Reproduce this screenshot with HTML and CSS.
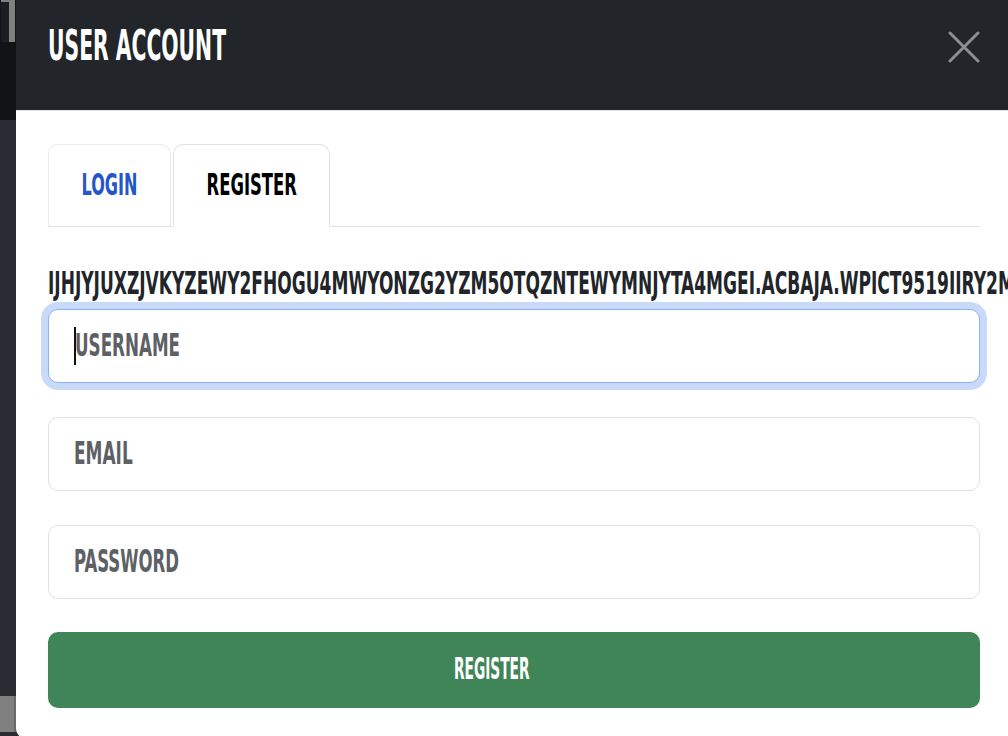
FILE: index.html
```html
<!DOCTYPE html>
<html lang="en">
<head>
<meta charset="utf-8">
<title>User Account</title>
<link rel="stylesheet" href="styles.css">
</head>
<body>
  <div class="backdrop" aria-hidden="true">
    <div class="bd-top"><span class="bd-edge"></span><span class="bd-block"></span><span class="bd-stem"></span></div>
    <div class="bd-dark"></div>
    <div class="bd-main"></div>
    <div class="bd-gray"></div>
    <div class="bd-foot"></div>
  </div>

  <div class="modal" role="dialog" aria-labelledby="modal-title">
    <header class="modal-header">
      <h1 class="modal-title" id="modal-title"><span class="sq title-text">User Account</span></h1>
      <button class="close-btn" type="button" aria-label="Close">
        <svg width="32" height="32" viewBox="0 0 32 32" aria-hidden="true"><path d="M2 2 L30 30 M30 2 L2 30" fill="none" stroke="currentColor" stroke-width="3" stroke-linecap="round"/></svg>
      </button>
    </header>

    <div class="modal-body">
      <ul class="tabs">
        <li><a class="tab tab-login" href="#login"><span class="sq sq-c login-text">Login</span></a></li>
        <li><a class="tab tab-register active" href="#register"><span class="sq sq-c register-text">Register</span></a></li>
      </ul>

      <div class="token"><span class="sq token-text">IJHJYJUXZJVKYZEWY2FHOGU4MWYONZG2YZM5OTQZNTEWYMNJYTA4MGEI.ACBAJA.WPICT9519IIRY2M</span></div>

      <form class="form">
        <label class="field focused">
          <span class="caret"></span>
          <span class="sq ph ph-user">Username</span>
          <input class="field-input" type="text" aria-label="Username">
        </label>
        <label class="field">
          <span class="sq ph ph-email">Email</span>
          <input class="field-input" type="email" aria-label="Email">
        </label>
        <label class="field">
          <span class="sq ph ph-pass">Password</span>
          <input class="field-input" type="password" aria-label="Password">
        </label>
        <button class="submit" type="button"><span class="sq sq-c submit-text">Register</span></button>
      </form>
    </div>
  </div>
</body>
</html>
```

FILE: styles.css
```css
* {
  box-sizing: border-box;
}

html, body {
  margin: 0;
  padding: 0;
}

body {
  width: 1008px;
  height: 736px;
  overflow: hidden;
  display: flex;
  align-items: flex-start;
  background: #2a2b33;
  font-family: "DejaVu Sans Condensed", "DejaVu Sans", "Liberation Sans", sans-serif;
  font-stretch: condensed;
  font-weight: 700;
  text-transform: uppercase;
}

/* squeezed condensed display text */
.sq {
  display: inline-block;
  white-space: nowrap;
  transform-origin: left center;
  transform: scaleX(var(--sx, 0.58));
}

.sq-c {
  transform-origin: center center;
}

/* backdrop strip on the left */
.backdrop {
  width: 16px;
  flex: 0 0 16px;
  height: 736px;
  display: flex;
  flex-direction: column;
}

.bd-top {
  height: 42px;
  display: flex;
  background: #141518;
}

.bd-edge {
  width: 1px;
}

.bd-block {
  width: 8px;
  background: #1c1d21;
  border-top: 2px solid #7f7f7f;
}

.bd-stem {
  width: 6px;
  background: #7f7f7f;
}

.bd-dark {
  height: 78px;
  background: #111214;
}

.bd-main {
  flex: 1;
  background: #2a2b33;
}

.bd-gray {
  height: 36px;
  background: #808080;
  border-right: 2px solid #6a6a6a;
}

.bd-foot {
  height: 4px;
  background: #2a2b33;
}

/* modal */
.modal {
  flex: 0 0 996px;
  width: 996px;
  height: 738px;
  background: #fff;
  border-bottom-left-radius: 9px;
  overflow: hidden;
  display: flex;
  flex-direction: column;
}

.modal-header {
  height: 111px;
  flex: 0 0 111px;
  background: #222529;
  border-bottom: 1px solid #dee2e6;
  display: flex;
  align-items: flex-start;
  justify-content: space-between;
  padding: 25px 32px 0 32px;
}

.modal-title {
  margin: 0;
  font-size: 42px;
  line-height: 42px;
  font-weight: 700;
  color: #fff;
}

.title-text {
  --sx: 0.538;
}

.close-btn {
  margin-top: 6px;
  width: 32px;
  height: 32px;
  padding: 0;
  border: 0;
  background: transparent;
  color: #8c8d8f;
  display: flex;
}

.modal-body {
  padding: 33px 32px 0 32px;
}

/* tabs */
.tabs {
  list-style: none;
  margin: 0;
  padding: 0;
  display: flex;
  gap: 2px;
  border-bottom: 1px solid #dee2e6;
}

.tabs li {
  margin-bottom: -1px;
}

.tab {
  display: flex;
  justify-content: center;
  height: 83px;
  padding: 24px 0 26px 0;
  font-size: 31px;
  line-height: 31px;
  text-decoration: none;
  border: 1px solid #e9ecef;
  border-bottom-color: #dee2e6;
  border-radius: 10px 10px 0 0;
  color: #2356c6;
}

.tab.active {
  color: #000;
  border-color: #dee2e6 #dee2e6 #fff;
  background: #fff;
}

.tab-login {
  width: 123px;
}

.tab-register {
  width: 157px;
}

.login-text {
  --sx: 0.575;
}

.register-text {
  --sx: 0.588;
}

/* token line */
.token {
  margin-top: 40px;
  height: 32px;
  font-size: 32px;
  line-height: 32px;
  color: #212529;
  white-space: nowrap;
}

.token-text {
  --sx: 0.592;
}

/* form */
.form {
  margin: 10px 0 0 0;
  display: flex;
  flex-direction: column;
  gap: 34px;
}

.field {
  position: relative;
  height: 74px;
  display: flex;
  align-items: center;
  padding: 0 25px 3px 25px;
  border: 1px solid #dee2e6;
  border-radius: 10px;
  background: #fff;
  font-size: 32px;
  line-height: 32px;
  color: #5d6064;
}

.field.focused {
  border-color: #8cb2f5;
  box-shadow: 0 0 0 7px #c9d9fa;
}

.caret {
  width: 1.5px;
  height: 38px;
  margin: 3px -1px 0 0;
  background: #111;
}

.ph-user {
  --sx: 0.581;
}

.ph-email {
  --sx: 0.589;
}

.ph-pass {
  --sx: 0.574;
}

.field-input {
  position: absolute;
  inset: 0;
  width: 100%;
  height: 100%;
  opacity: 0;
  border: 0;
}

.submit {
  margin-top: -1px;
  height: 76px;
  display: flex;
  align-items: center;
  justify-content: center;
  padding: 0 45px 3px 0;
  border: 0;
  border-radius: 10px;
  background: #408558;
  color: #fff;
  font-family: inherit;
  font-weight: 700;
  font-size: 31px;
  line-height: 31px;
  text-transform: uppercase;
}

.submit-text {
  --sx: 0.492;
}
```
